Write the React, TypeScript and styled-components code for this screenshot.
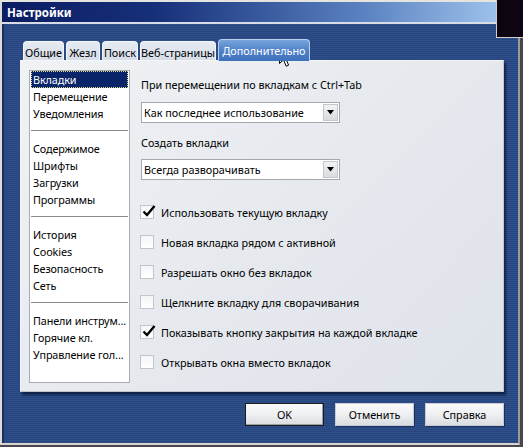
import React from 'react';
import styled, { createGlobalStyle } from 'styled-components';

const Global = createGlobalStyle`
  html, body { margin: 0; padding: 0; background: #3c3c40; }
  body { font-family: "Noto Sans", "DejaVu Sans", sans-serif; font-size: 10.8px; }
  * { box-sizing: border-box; }
`;

const Screen = styled.div`
  position: relative;
  width: 523px;
  height: 447px;
  background: #48484c;
  overflow: hidden;
`;

const Window = styled.div`
  width: 520px;
  height: 445px;
  border-top: 2px solid #e6e4de;
  border-left: 2px solid #dedcd6;
  border-right: 2px solid #9a9a9c;
  border-bottom: 2px solid #d6d4ce;
  display: flex;
  flex-direction: column;
`;

const TitleBar = styled.div`
  height: 22px;
  flex: none;
  border-bottom: 2px solid #d8dce6;
  background: linear-gradient(90deg, #0a1c62 0%, #17307a 30%, #5a82c0 70%, #a8cbf2 100%);
  color: #fff;
  font-weight: bold;
  font-size: 11.5px;
  line-height: 20px;
  padding: 1px 0 0 5px;
`;

const Body = styled.div`
  flex: 1;
  display: flex;
  flex-direction: column;
  padding: 15px 13px 0 16px;
  border-left: 2px solid #1c2e62;
  background: repeating-linear-gradient(180deg, #2e4f8a 0px, #2e4f8a 1px, #27467f 1px, #27467f 2px);
`;

const TabsRow = styled.div`
  display: flex;
  align-items: flex-end;
  gap: 2px;
  height: 21px;
  margin-left: 3px;
  position: relative;
  z-index: 1;
`;

const Tab = styled.div<{ $w: number; $active?: boolean }>`
  width: ${p => p.$w}px;
  height: ${p => (p.$active ? 22 : 19)}px;
  margin-bottom: ${p => (p.$active ? -1 : 0)}px;
  border: 1px solid ${p => (p.$active ? '#b6cfee' : '#f2f5fa')};
  border-bottom: none;
  border-radius: 4px 4px 0 0;
  background: ${p =>
    p.$active
      ? 'linear-gradient(180deg, #78a4dc 0%, #4f82c8 50%, #3f72bc 100%)'
      : 'linear-gradient(180deg, #e6ebf2 0%, #d6dde8 100%)'};
  color: ${p => (p.$active ? '#fff' : '#000')};
  display: flex;
  align-items: center;
  justify-content: center;
  white-space: nowrap;
  padding-top: ${p => (p.$active ? 0 : 2)}px;
  overflow: hidden;
`;

const Panel = styled.div`
  width: 484px;
  height: 332px;
  flex: none;
  display: flex;
  padding: 9px 8px 8px 8px;
  border-top: 1px solid #f6f7f9;
  border-left: 1px solid #f4f5f8;
  border-right: 1px solid #c4c8ce;
  border-bottom: 1px solid #c0c4ca;
  background: linear-gradient(135deg, #f0f2f5 0%, #e6e9ee 50%, #dfe3ea 100%);
  box-shadow: 2px 3px 2px rgba(5, 15, 45, 0.65);
`;

const List = styled.div`
  width: 101px;
  flex: none;
  background: #fff;
  border: 1px solid #a9adb3;
  padding: 0 1px;
  display: flex;
  flex-direction: column;
`;

const ListItem = styled.div<{ $selected?: boolean }>`
  height: 17px;
  line-height: 15px;
  padding-left: 1px;
  white-space: nowrap;
  overflow: visible;
  letter-spacing: -0.1px;
  border: 1px ${p => (p.$selected ? 'dotted #d8d488' : 'solid transparent')};
  background: ${p => (p.$selected ? '#0a246a' : 'transparent')};
  color: ${p => (p.$selected ? '#fff' : '#000')};
`;

const Separator = styled.div`
  height: 1px;
  margin: 8px 0 9px;
  background: #8a8d92;
`;

const Options = styled.div`
  margin-left: 11px;
  padding-top: 7px;
  display: flex;
  flex-direction: column;
`;

const Label = styled.div<{ $mt?: number }>`
  height: 16px;
  line-height: 16px;
  margin-top: ${p => p.$mt ?? 0}px;
  white-space: nowrap;
`;

const Select = styled.div<{ $mt: number }>`
  width: 199px;
  height: 21px;
  margin-top: ${p => p.$mt}px;
  background: #fff;
  border: 1px solid #a4a8ae;
  display: flex;
  align-items: center;
  justify-content: space-between;
  padding: 0 1px 0 2px;
`;

const ArrowButton = styled.div`
  width: 15px;
  height: 17px;
  border: 1px solid #c4c8ce;
  background: linear-gradient(180deg, #f2f3f5 0%, #d8dbe0 100%);
  display: flex;
  align-items: center;
  justify-content: center;
`;

const Checks = styled.div`
  margin-top: 17px;
  display: flex;
  flex-direction: column;
`;

const CheckRow = styled.div`
  height: 30px;
  display: flex;
  align-items: center;
  gap: 7px;
  margin-left: -1px;
  white-space: nowrap;
`;

const Box = styled.div`
  position: relative;
  width: 14px;
  height: 14px;
  flex: none;
  border: 1px solid #c2c6cc;
  background: linear-gradient(180deg, #f4f5f7 0%, #ffffff 100%);
`;

const Tick = styled.svg`
  position: absolute;
  left: 0px;
  top: -2px;
`;

const Buttons = styled.div`
  width: 484px;
  display: flex;
  justify-content: flex-end;
  gap: 11px;
  margin-top: 11px;
`;

const Button = styled.div<{ $default?: boolean }>`
  width: 79px;
  height: 23px;
  display: flex;
  align-items: center;
  justify-content: center;
  border: 1px solid ${p => (p.$default ? '#1a1a1a' : '#c8ccd2')};
  background: linear-gradient(180deg, #fafafb 0%, #eceef0 55%, #d9dce0 100%);
  box-shadow: ${p => (p.$default ? 'inset -1px -1px 0 #9aa0a8' : '1px 1px 0 rgba(10,20,50,0.5)')};
  color: #000;
`;

const Corner = styled.div`
  position: absolute;
  left: 496px;
  top: 0;
  width: 27px;
  height: 38px;
  background: #0d0512;
  border-left: 1px solid #d0cec8;
  border-bottom: 1px solid #d0cec8;
`;

const Cursor = styled.svg`
  position: absolute;
  left: 279px;
  top: 47px;
`;

const Check = ({ on, label }: { on?: boolean; label: string }) => (
  <CheckRow>
    <Box>
      {on && (
        <Tick width="16" height="14" viewBox="0 0 16 14">
          <path d="M2.5 7.5 L6 11 L13.5 2" fill="none" stroke="#000" strokeWidth="2.4" />
        </Tick>
      )}
    </Box>
    {label}
  </CheckRow>
);

const Dropdown = ({ text, mt }: { text: string; mt: number }) => (
  <Select $mt={mt}>
    <span>{text}</span>
    <ArrowButton>
      <svg width="7" height="5" viewBox="0 0 7 5">
        <path d="M0 0 H7 L3.5 4.5 Z" fill="#000" />
      </svg>
    </ArrowButton>
  </Select>
);

const groups = [
  ['Вкладки', 'Перемещение', 'Уведомления'],
  ['Содержимое', 'Шрифты', 'Загрузки', 'Программы'],
  ['История', 'Cookies', 'Безопасность', 'Сеть'],
  ['Панели инструм...', 'Горячие кл.', 'Управление гол...'],
];

export default function App() {
  return (
    <Screen>
      <Global />
      <Window>
        <TitleBar>Настройки</TitleBar>
        <Body>
          <TabsRow>
            <Tab $w={41}>Общие</Tab>
            <Tab $w={34}>Жезл</Tab>
            <Tab $w={36}>Поиск</Tab>
            <Tab $w={76}>Веб-страницы</Tab>
            <Tab $w={92} $active>Дополнительно</Tab>
          </TabsRow>
          <Panel>
            <List>
              {groups.map((g, gi) => (
                <React.Fragment key={gi}>
                  {gi > 0 && <Separator />}
                  {g.map(item => (
                    <ListItem key={item} $selected={item === 'Вкладки'}>
                      {item}
                    </ListItem>
                  ))}
                </React.Fragment>
              ))}
            </List>
            <Options>
              <Label>При перемещении по вкладкам с Ctrl+Tab</Label>
              <Dropdown text="Как последнее использование" mt={9} />
              <Label $mt={12}>Создать вкладки</Label>
              <Dropdown text="Всегда разворачивать" mt={8} />
              <Checks>
                <Check on label="Использовать текущую вкладку" />
                <Check label="Новая вкладка рядом с активной" />
                <Check label="Разрешать окно без вкладок" />
                <Check label="Щелкните вкладку для сворачивания" />
                <Check on label="Показывать кнопку закрытия на каждой вкладке" />
                <Check label="Открывать окна вместо вкладок" />
              </Checks>
            </Options>
          </Panel>
          <Buttons>
            <Button $default>OK</Button>
            <Button>Отменить</Button>
            <Button>Справка</Button>
          </Buttons>
        </Body>
      </Window>
      <Corner />
      <Cursor width="13" height="21" viewBox="0 0 13 21">
        <path d="M0.5 0.5 V16.5 L4.5 12.8 L7.2 19.2 L9.6 18.2 L7 12 H12.2 Z" fill="#fff" stroke="#000" strokeWidth="1" strokeLinejoin="miter" />
      </Cursor>
    </Screen>
  );
}
